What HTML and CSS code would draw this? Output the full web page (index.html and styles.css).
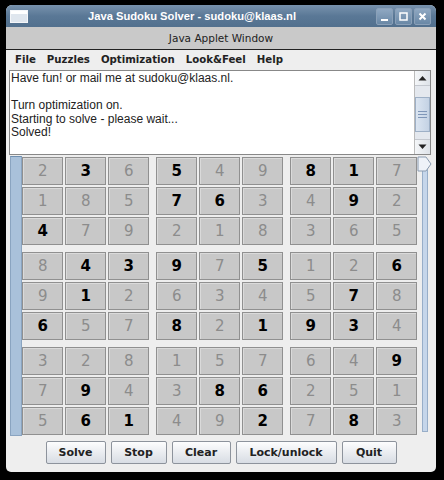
FILE: index.html
```html
<!DOCTYPE html>
<html>
<head>
<meta charset="utf-8">
<link rel="stylesheet" href="styles.css">
</head>
<body>
<div class="window">
  <div class="titlebar">
    <div class="appicon"><div class="appicon-bar"></div></div>
    <div class="title">Java Sudoku Solver - sudoku@klaas.nl</div>
    <div class="wbtns">
      <div class="wbtn"><svg width="13" height="13" viewBox="0 0 13 13"><rect x="3" y="9" width="7" height="2" fill="#fff"/></svg></div>
      <div class="wbtn"><svg width="13" height="13" viewBox="0 0 13 13"><rect x="3" y="3" width="7" height="7" fill="none" stroke="#fff" stroke-width="1.5"/></svg></div>
      <div class="wbtn"><svg width="13" height="13" viewBox="0 0 13 13"><path d="M3.5 3.5 L9.5 9.5 M9.5 3.5 L3.5 9.5" stroke="#fff" stroke-width="2"/></svg></div>
    </div>
  </div>
  <div class="appletbar">Java Applet Window</div>
  <div class="menubar">
    <span class="menu">File</span>
    <span class="menu">Puzzles</span>
    <span class="menu">Optimization</span>
    <span class="menu">Look&amp;Feel</span>
    <span class="menu">Help</span>
  </div>
  <div class="content">
    <div class="textarea">
      <div class="log">Have fun! or mail me at sudoku@klaas.nl.<br><br>Turn optimization on.<br>Starting to solve - please wait...<br>Solved!</div>
      <div class="vscroll">
        <div class="arrow"><svg width="9" height="6" viewBox="0 0 9 6"><path d="M0.5 5.5 L4.5 1 L8.5 5.5 Z" fill="#222"/></svg></div>
        <div class="track"></div>
        <div class="thumb"><div class="grip"></div><div class="grip"></div><div class="grip"></div></div>
        <div class="track short"></div>
        <div class="arrow"><svg width="9" height="6" viewBox="0 0 9 6"><path d="M0.5 0.5 L4.5 5 L8.5 0.5 Z" fill="#222"/></svg></div>
      </div>
    </div>
    <div class="board-row">
      <div class="lstrip"></div>
      <div class="board" id="board"></div>
      <div class="rstrip">
        <div class="rline"></div>
        <svg class="rthumb" width="15" height="16" viewBox="0 0 15 16"><path d="M1 1 H9 L14 8 L9 15 H1 Z" fill="#eef2f8" stroke="#8a9bb0"/></svg>
      </div>
    </div>
    <div class="buttons">
      <div class="btn w-solve">Solve</div>
      <div class="btn w-stop">Stop</div>
      <div class="btn w-clear">Clear</div>
      <div class="btn w-lock">Lock/unlock</div>
      <div class="btn w-quit">Quit</div>
    </div>
  </div>
</div>
<script src="app.js"></script>
</body>
</html>
```
FILE: app.js
```js
var rows = [
  "2 3* 6 5* 4 9 8* 1* 7",
  "1 8 5 7* 6* 3 4 9* 2",
  "4* 7 9 2 1 8 3 6 5",
  "8 4* 3* 9* 7 5* 1 2 6*",
  "9 1* 2 6 3 4 5 7* 8",
  "6* 5 7 8* 2 1* 9* 3* 4",
  "3 2 8 1 5 7 6 4 9*",
  "7 9* 4 3 8* 6* 2 5 1",
  "5 6* 1* 4 9 2* 7 8* 3"
];
var board = document.getElementById('board');
var cells = rows.map(function (r) { return r.split(' '); });
for (var br = 0; br < 3; br++) {
  for (var bc = 0; bc < 3; bc++) {
    var blk = document.createElement('div');
    blk.className = 'block';
    for (var r = 0; r < 3; r++) {
      for (var c = 0; c < 3; c++) {
        var v = cells[br * 3 + r][bc * 3 + c];
        var d = document.createElement('div');
        var given = v.indexOf('*') >= 0;
        d.className = 'cell' + (given ? ' given' : '');
        d.textContent = v.replace('*', '');
        blk.appendChild(d);
      }
    }
    board.appendChild(blk);
  }
}
```
FILE: styles.css
```css
html, body {
  margin: 0;
  padding: 0;
  background: #000;
}
body {
  width: 444px;
  height: 480px;
  overflow: hidden;
  font-family: "DejaVu Sans", sans-serif;
}
.window {
  margin: 5px 0 0 6px;
  width: 430px;
  height: 467px;
  background: #eeeeee;
  border-radius: 6px 6px 5px 5px;
  overflow: hidden;
  display: flex;
  flex-direction: column;
}
.titlebar {
  height: 22px;
  background: linear-gradient(#7892ad, #5a7896 50%, #52708e);
  display: flex;
  align-items: center;
  position: relative;
}
.appicon {
  width: 16px;
  height: 11px;
  margin-left: 4px;
  background: #dfe6ee;
  border: 1px solid #f4f6f9;
}
.appicon-bar {
  height: 3px;
  background: #fff;
}
.title {
  flex: 1;
  text-align: center;
  color: #fff;
  font-family: "Liberation Sans", sans-serif;
  font-weight: bold;
  font-size: 11.2px;
  padding-right: 20px;
}
.wbtns {
  display: flex;
  gap: 2px;
  margin-right: 5px;
}
.wbtn {
  width: 15px;
  height: 15px;
  border: 1px solid #8aa0b8;
  border-radius: 2px;
  background: linear-gradient(#8fa8c2, #6a88a6);
  display: flex;
  align-items: center;
  justify-content: center;
}
.appletbar {
  height: 22px;
  background: #c9c9c9;
  border-bottom: 1px solid #222;
  font-size: 10.5px;
  color: #222;
  text-align: center;
  line-height: 22px;
}
.menubar {
  height: 19px;
  background: #eeeeee;
  display: flex;
  align-items: center;
  padding-left: 9px;
  font-size: 10.2px;
  font-weight: bold;
  color: #222;
}
.menu {
  margin-right: 11px;
}
.content {
  flex: 1;
  padding: 1px 5px 0 3px;
  display: flex;
  flex-direction: column;
}
.textarea {
  height: 83px;
  border: 1px solid #888;
  background: #fff;
  display: flex;
}
.log {
  flex: 1;
  font-family: "Liberation Sans", sans-serif;
  font-size: 12px;
  line-height: 13.6px;
  color: #222;
  padding: 1px 0 0 1px;
}
.vscroll {
  width: 15px;
  border-left: 1px solid #bbb;
  background: #eef0f3;
  display: flex;
  flex-direction: column;
}
.arrow {
  height: 14px;
  display: flex;
  align-items: center;
  justify-content: center;
  background: linear-gradient(90deg, #f4f6f8, #dde2e8);
  border-bottom: 1px solid #c4c8cf;
}
.arrow:last-child {
  border-top: 1px solid #c4c8cf;
  border-bottom: none;
}
.track {
  height: 11px;
  background: #e4e8ee;
}
.track.short {
  flex: 0 0 7px;
  height: 7px;
}
.thumb {
  flex: 1;
  background: linear-gradient(90deg, #dbe5f1, #c4d2e4);
  border: 1px solid #9eb0c6;
  display: flex;
  flex-direction: column;
  justify-content: center;
  align-items: center;
  gap: 2px;
}
.grip {
  width: 9px;
  height: 1px;
  background: #7f96b8;
}
.board-row {
  display: flex;
  margin-top: 1px;
  height: 280px;
}
.lstrip {
  width: 11px;
  margin-left: 1px;
  background: #a9c1da;
  border: 1px solid #8aa4c0;
  border-top-color: #6f8fb0;
}
.board {
  display: grid;
  grid-template-columns: repeat(3, 127px);
  grid-template-rows: repeat(3, 88px);
  column-gap: 7px;
  row-gap: 7px;
  padding: 1px 0 0 0;
}
.block {
  display: grid;
  grid-template-columns: repeat(3, 41px);
  grid-template-rows: repeat(3, 28px);
  gap: 2px;
}
.cell {
  background: #c8c8c8;
  border: 1px solid #909090;
  box-shadow: inset 1px 1px 0 #dadada;
  display: flex;
  align-items: center;
  justify-content: center;
  font-family: "DejaVu Sans", sans-serif;
  font-size: 15px;
  color: #8c8c8c;
}
.cell.given {
  color: #000;
  font-weight: bold;
}
.rstrip {
  width: 15px;
  position: relative;
  background: #eeeeee;
}
.rline {
  position: absolute;
  left: 5px;
  top: 6px;
  bottom: 4px;
  width: 4px;
  background: #c6d6ea;
  border: 1px solid #98aec8;
}
.rthumb {
  position: absolute;
  left: 0;
  top: 0;
}
.buttons {
  display: flex;
  justify-content: center;
  gap: 5px;
  margin-top: 5px;
  padding-left: 2px;
}
.btn {
  height: 21px;
  border: 1px solid #8d939c;
  border-radius: 2px;
  background: linear-gradient(#fdfdfe, #e8ebef 55%, #d8dde4);
  display: flex;
  align-items: center;
  justify-content: center;
  font-size: 11px;
  font-weight: bold;
  color: #222;
}
.w-solve { width: 58px; }
.w-stop { width: 54px; }
.w-clear { width: 57px; }
.w-lock { width: 99px; }
.w-quit { width: 53px; }
```
